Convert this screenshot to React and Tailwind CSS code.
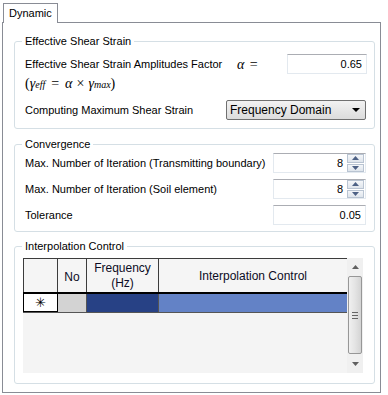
import React from 'react'

const ui = { fontFamily: '"Liberation Sans", Arial, sans-serif' }
const math = { fontFamily: '"Liberation Serif", "DejaVu Serif", serif' }

function Group({ title, className, children }) {
  return (
    <div className={`relative border border-[#d5dfe5] rounded-[3px] ${className}`}>
      <span className="absolute -top-[8px] left-[7px] bg-white px-[3px] leading-[14px] text-[11px] text-black">{title}</span>
      {children}
    </div>
  )
}

function Field({ value, w = 'w-[93px]', children }) {
  return (
    <div className={`h-[20px] ${w} flex items-center border border-[#e3e9ef] border-t-[#abadb3] bg-white`}>
      <span className="flex-1 text-right pr-[4px] text-[11px]">{value}</span>
      {children}
    </div>
  )
}

function Spin() {
  return (
    <div className="flex flex-col gap-px h-[18px] w-[17px] mr-px">
      {['up', 'down'].map(d => (
        <div key={d} className="flex-1 flex items-center justify-center border border-[#b9c4d2] bg-gradient-to-b from-[#f4f6f9] to-[#dfe5ec]">
          <svg width="7" height="4" viewBox="0 0 7 4">
            {d === 'up'
              ? <path d="M0 4 L3.5 0 L7 4 Z" fill="#4d6185" />
              : <path d="M0 0 L3.5 4 L7 0 Z" fill="#4d6185" />}
          </svg>
        </div>
      ))}
    </div>
  )
}

export default function App() {
  return (
    <div className="w-[388px] h-[395px] bg-white text-black text-[11px] overflow-hidden" style={ui}>
      {/* Tab strip */}
      <div className="pl-[3px] pt-[3px] flex">
        <div className="relative z-10 -mb-px h-[20px] w-[55px] border border-b-0 border-[#898c95] bg-white pl-[5px] pt-[3px] leading-[13px]">Dynamic</div>
      </div>

      {/* Panel */}
      <div className="ml-[2px] w-[379px] h-[371px] border border-[#898c95] bg-white pl-[11px] pr-[5px] pt-[18px]">

        <Group title="Effective Shear Strain" className="h-[88px] pl-[10px] pr-[7px] pt-[12px]">
          <div className="flex items-center h-[20px]">
            <span className="w-[212px]">Effective Shear Strain Amplitudes Factor</span>
            <span className="italic text-[14px] w-[50px]" style={math}>α <span className="not-italic ml-[2px]">=</span></span>
            <Field value="0.65" w="w-[80px]" />
          </div>
          <div className="h-[18px] flex items-center text-[14px] italic" style={math}>
            <span className="not-italic">(</span>γ<sub className="text-[10px] -bottom-[2px]">eff</sub>
            <span className="not-italic mx-[6px]">=</span>α<span className="not-italic mx-[4px]">×</span>γ<sub className="text-[10px] -bottom-[2px]">max</sub><span className="not-italic">)</span>
          </div>
          <div className="flex items-center justify-between h-[20px] mt-[8px]">
            <span>Computing Maximum Shear Strain</span>
            <div className="mr-[1px] h-[20px] w-[140px] flex items-center border border-[#707070] rounded-[2px] bg-gradient-to-b from-[#f2f2f2] to-[#dcdcdc] pl-[3px] pr-[5px]">
              <span className="flex-1 text-[12px]">Frequency Domain</span>
              <svg width="8" height="4" viewBox="0 0 8 4"><path d="M0 0 L8 0 L4 4 Z" fill="#000" /></svg>
            </div>
          </div>
        </Group>

        <Group title="Convergence" className="mt-[15px] h-[88px] pl-[10px] pr-[8px] pt-[8px] flex flex-col gap-[6px]">
          <div className="flex items-center justify-between">
            <span>Max. Number of Iteration (Transmitting boundary)</span>
            <Field value="8"><Spin /></Field>
          </div>
          <div className="flex items-center justify-between">
            <span>Max. Number of Iteration (Soil element)</span>
            <Field value="8"><Spin /></Field>
          </div>
          <div className="flex items-center justify-between">
            <span>Tolerance</span>
            <Field value="0.05" />
          </div>
        </Group>

        <Group title="Interpolation Control" className="mt-[14px] h-[138px] pl-[8px] pr-[11px] pt-[11px]">
          <div className="flex h-[115px] bg-[#f4f4f4]">
            <div className="flex-1 flex flex-col" style={{ fontFamily: 'Arial, "Liberation Sans", sans-serif' }}>
              {/* header */}
              <div className="flex h-[36px] border-t border-[#3c3c3c] border-b-2 border-b-black bg-[#f5f5f5] text-[12px] text-[#0c0c24]">
                <div className="w-[35px] border-l border-r border-[#3c3c3c]" />
                <div className="w-[29px] border-r border-[#3c3c3c] flex items-center justify-center pt-[2px]">No</div>
                <div className="w-[72px] border-r border-[#3c3c3c] flex flex-col items-center justify-center leading-[15px]">
                  <span>Frequency</span><span>(Hz)</span>
                </div>
                <div className="flex-1 flex items-center justify-center pt-[1px]">Interpolation Control</div>
              </div>
              {/* row */}
              <div className="flex h-[19px] border-b border-[#555]">
                <div className="w-[35px] bg-white border-l border-r border-b border-black flex items-center justify-center text-[13px] leading-none">✳</div>
                <div className="w-[29px] bg-[#d3d3d3] border-r border-[#555]" />
                <div className="w-[72px] bg-[#274185] border-r border-[#555]" />
                <div className="flex-1 bg-[#6382c6]" />
              </div>
            </div>
            {/* scrollbar */}
            <div className="w-[16px] flex flex-col items-center bg-[#f0f0f0] py-[2px]">
              <div className="h-[14px] flex items-center justify-center">
                <svg width="7" height="4" viewBox="0 0 7 4"><path d="M0 4 L3.5 0 L7 4 Z" fill="#606060" /></svg>
              </div>
              <div className="mt-[2px] w-[14px] h-[78px] border border-[#979797] rounded-[2px] bg-gradient-to-r from-[#f0f0f0] via-[#e4e4e4] to-[#d4d4d4] flex flex-col items-center justify-center gap-[2px]">
                <div className="w-[6px] h-px bg-[#666]" />
                <div className="w-[6px] h-px bg-[#666]" />
                <div className="w-[6px] h-px bg-[#666]" />
              </div>
              <div className="flex-1" />
              <div className="h-[14px] flex items-center justify-center">
                <svg width="7" height="4" viewBox="0 0 7 4"><path d="M0 0 L3.5 4 L7 0 Z" fill="#606060" /></svg>
              </div>
            </div>
          </div>
        </Group>
      </div>
    </div>
  )
}
